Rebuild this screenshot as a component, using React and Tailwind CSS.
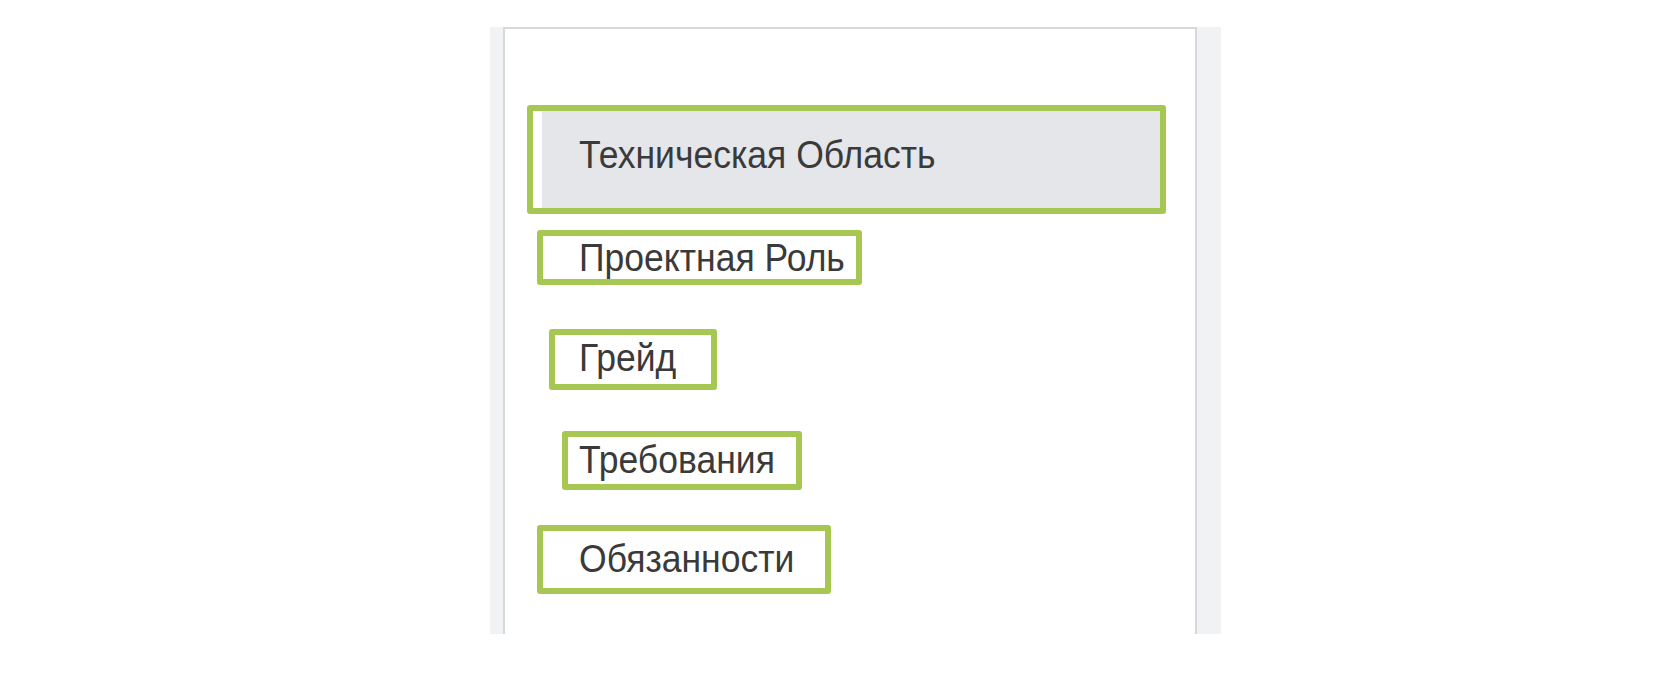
import React from "react";

const font = { fontFamily: '"Liberation Sans", Arial, sans-serif' };

function Label({ children }) {
  return (
    <span className="inline-block origin-left scale-x-[0.935] whitespace-nowrap text-[38px] leading-none text-[#3a3a3a]">
      {children}
    </span>
  );
}

export default function App() {
  return (
    <div className="w-[1680px] h-[680px] bg-white pt-[27px]" style={font}>
      <div className="ml-[490px] w-[731px] h-[607px] bg-[#f1f2f4] pl-[13px] pr-[24px] flex">
        <div className="flex-1 bg-white border-2 border-b-0 border-[#d5d8dd] pt-[76px] flex flex-col items-start">
          <div className="ml-[22px] w-[639px] h-[109px] border-[6px] border-[#a6c852] rounded-[3px]">
            <div className="h-full border-l-[9px] border-white bg-[#e4e6ea] flex items-center pl-[37px] pb-[9px]">
              <Label>Техническая Область</Label>
            </div>
          </div>
          <div className="mt-[16px] ml-[32px] w-[325px] h-[55px] border-[6px] border-[#a6c852] rounded-[3px] flex items-center pl-[36px]">
            <Label>Проектная Роль</Label>
          </div>
          <div className="mt-[44px] ml-[44px] w-[168px] h-[61px] border-[6px] border-[#a6c852] rounded-[3px] flex items-center pl-[24px] pb-[4px]">
            <Label>Грейд</Label>
          </div>
          <div className="mt-[41px] ml-[57px] w-[240px] h-[59px] border-[6px] border-[#a6c852] rounded-[3px] flex items-center pl-[11px] pb-[2px]">
            <Label>Требования</Label>
          </div>
          <div className="mt-[35px] ml-[32px] w-[294px] h-[69px] border-[6px] border-[#a6c852] rounded-[3px] flex items-center pl-[36px] pb-[2px]">
            <Label>Обязанности</Label>
          </div>
        </div>
      </div>
    </div>
  );
}
